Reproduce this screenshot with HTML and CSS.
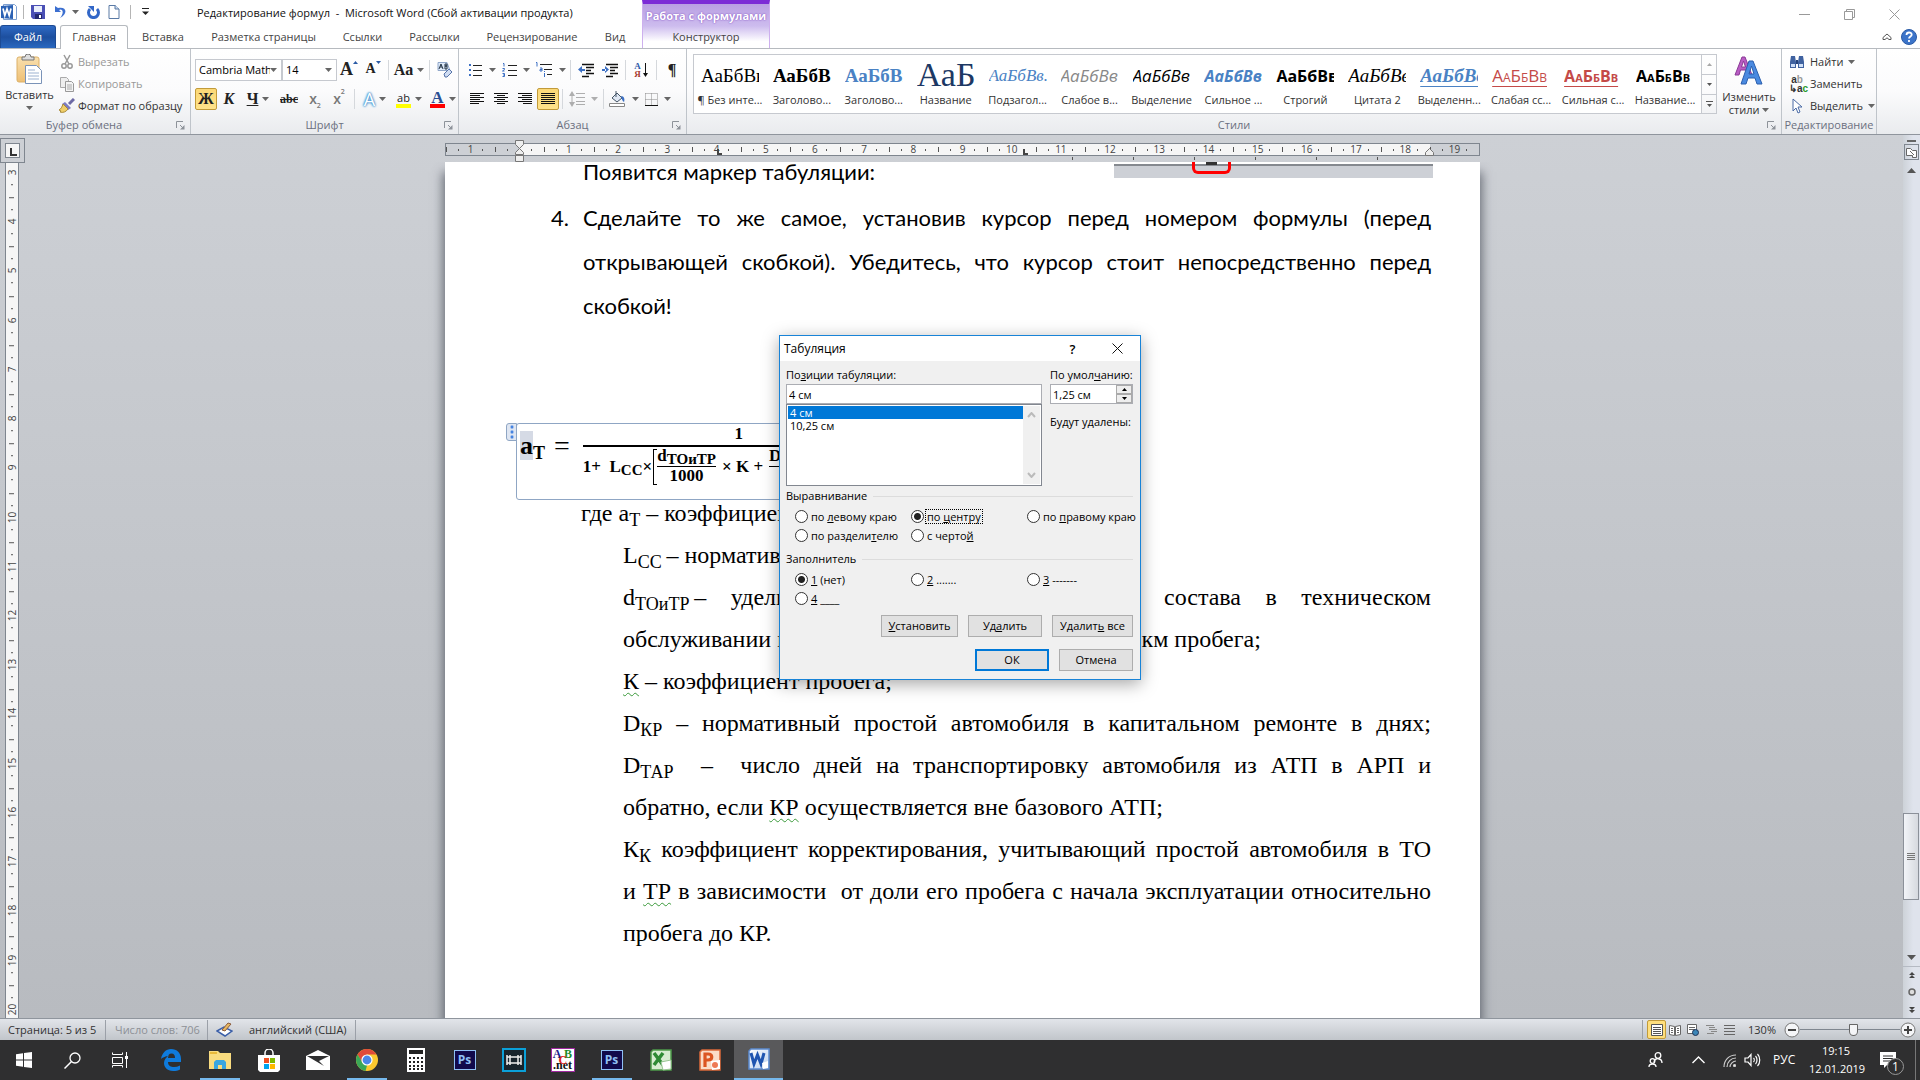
FILE: index.html
```html
<!DOCTYPE html>
<html lang="ru">
<head>
<meta charset="utf-8">
<title>Редактирование формул - Microsoft Word</title>
<link rel="stylesheet" href="styles.css">
</head>
<body>
<svg class="defs" aria-hidden="true">
  <defs>
    <linearGradient id="gw" x1="0" y1="0" x2="1" y2="1"><stop offset="0" stop-color="#fff"/><stop offset="1" stop-color="#b9d0ee"/></linearGradient>
    <linearGradient id="gp" x1="0" y1="0" x2="0" y2="1"><stop offset="0" stop-color="#f9e0ae"/><stop offset="1" stop-color="#eebf74"/></linearGradient>
    <symbol id="arrow" viewBox="0 0 7 4"><path d="M0 0h7L3.500 4z" fill="#666"/></symbol>
    <symbol id="launch" viewBox="0 0 9 9"><path d="M.5 7V.5H7M4 4l3 3" fill="none" stroke="#8d9299"/><path d="M8.500 4v4.500H4z" fill="#8d9299"/></symbol>
    <symbol id="word" viewBox="0 0 16 16"><path d="M2.500.5h11l2 2v13h-13z" fill="#fff" stroke="#7fa0cf"/><path d="M0 2l12-1v14L0 14z" fill="#2c62b5"/><path d="M2 4.500l1.800 7L6 5l2.200 6.500L10 4.500" fill="none" stroke="#fff" stroke-width="1.700"/></symbol>
  </defs>
</svg>

<header class="titlebar">
  <div class="quick">
    <svg width="16" height="16"><use href="#word"/></svg>
    <i class="vsep"></i>
    <button aria-label="Сохранить"><svg width="14" height="14" viewBox="0 0 14 14"><path d="M0 0h14v14H2l-2-2z" fill="#4a4fb5"/><path d="M3 1h8v6H3z" fill="#e9eefb"/><path d="M4 9h7v5H4z" fill="#23276e"/><path d="M8 10h2v3H8z" fill="#fff"/></svg></button>
    <button class="undo" aria-label="Отменить"><svg width="13" height="14" viewBox="0 0 13 14"><path d="M1 1v6h6L5 5c3-2 6 2 1 8 8-4 7-12-2-10z" fill="#3c6fd0"/></svg><svg class="ar"><use href="#arrow"/></svg></button>
    <button class="redo" aria-label="Повторить"><svg width="13" height="14" viewBox="0 0 13 14"><path d="M3 4a5 5 0 1 0 7 0" fill="none" stroke="#3267c8" stroke-width="3"/><path d="M1 1h6v6z" fill="#3267c8"/></svg></button>
    <button class="new" aria-label="Создать"><svg width="12" height="14" viewBox="0 0 12 14"><path d="M1 .5h6L11 4v9.500H1z" fill="#fff" stroke="#5a7aa5"/><path d="M7 0v4h4" fill="#c9d9ee" stroke="#5a7aa5"/></svg></button>
    <i class="vsep"></i>
    <button aria-label="Настройка панели"><svg width="7" height="8" viewBox="0 0 7 8"><path d="M0 .5h7" stroke="#222"/><path d="M0 3.500h7L3.500 7z" fill="#222"/></svg></button>
  </div>
  <h1>Редактирование формул&nbsp; -&nbsp; Microsoft Word (Сбой активации продукта)</h1>
  <div class="winbtns">
    <button aria-label="Свернуть"><svg width="11" height="11" viewBox="0 0 11 11"><path d="M0 5.500h11" stroke="#999"/></svg></button>
    <button aria-label="Развернуть"><svg width="11" height="11" viewBox="0 0 11 11"><path d="M.5 2.500h8v8h-8zM2.500 2V.5h8v8H9" fill="none" stroke="#999"/></svg></button>
    <button aria-label="Закрыть"><svg width="11" height="11" viewBox="0 0 11 11"><path d="M.5.5l10 10M10.500.5l-10 10" stroke="#999"/></svg></button>
  </div>
</header>

<nav class="tabs">
  <a class="file" href="#file">Файл</a>
  <a class="active" href="#home">Главная</a>
  <a href="#insert">Вставка</a>
  <a href="#layout">Разметка страницы</a>
  <a href="#refs">Ссылки</a>
  <a href="#mail">Рассылки</a>
  <a href="#review">Рецензирование</a>
  <a href="#view">Вид</a>
  <div class="context"><span>Работа с формулами</span><a href="#design">Конструктор</a></div>
  <div class="helpers">
    <button aria-label="Свернуть ленту"><svg width="10" height="8" viewBox="0 0 10 8"><path d="M1 4.500L5 1l4 3.500v2H7L5 4.800 3 6.500H1z" fill="#fff" stroke="#555"/></svg></button>
    <button aria-label="Справка"><svg width="16" height="16" viewBox="0 0 16 16"><circle cx="8" cy="8" r="7.500" fill="#3c74c9" stroke="#2a5aa5"/><path d="M5.500 6c0-3.400 5.200-3.200 5.200-.3C10.700 7.500 8 7.600 8 9.600M8 11v2" fill="none" stroke="#fff" stroke-width="1.800"/></svg></button>
  </div>
</nav>

<section class="ribbon">
  <div class="group clip">
    <div class="tools">
      <button class="big paste"><svg width="27" height="30" viewBox="0 0 27 30"><rect x="1" y="3" width="22" height="25" rx="2" fill="url(#gp)" stroke="#dcb068"/><path d="M6 6V3h3a3 3 0 0 1 6 0h3v3z" fill="#ddd" stroke="#777"/><path d="M9.500 11.500h11l5 5v13h-16z" fill="#fff" stroke="#7a93b8"/><path d="M12 16h7M12 19h11M12 22h11M12 25h11" stroke="#9db2d0"/></svg><span>Вставить</span><svg class="ar"><use href="#arrow"/></svg></button>
      <div class="stack">
        <button class="off"><svg width="16" height="16" viewBox="0 0 16 16"><path d="M5 1l5 9M11 1l-5 9" stroke="#999" stroke-width="1.500"/><circle cx="5" cy="12" r="2.200" fill="none" stroke="#999" stroke-width="1.500"/><circle cx="11" cy="12" r="2.200" fill="none" stroke="#999" stroke-width="1.500"/></svg>Вырезать</button>
        <button class="off"><svg width="16" height="16" viewBox="0 0 16 16"><path d="M1.500 1.500h6l2 2v8h-8z" fill="#eee" stroke="#aaa"/><path d="M6.500 5.500h6l2 2v8h-8z" fill="#f4f4f4" stroke="#999"/><path d="M8 9h5M8 11h5M8 13h5" stroke="#aaa"/></svg>Копировать</button>
        <button><svg width="16" height="16" viewBox="0 0 16 16"><path d="M15 1l-5 5" stroke="#6d6aa5" stroke-width="3"/><path d="M6 4l6 6-3 2-6-6z" fill="#7c7cc0"/><path d="M4 6l5 5c-2 3-5 4-8 3l1-1-2-1c2-1 3-3 4-6z" fill="#f0cf6a" stroke="#a98a3a"/></svg>Формат по образцу</button>
      </div>
    </div>
    <footer>Буфер обмена<svg width="9" height="9"><use href="#launch"/></svg></footer>
  </div>

  <div class="group font">
    <div class="rows">
      <div class="row">
        <div class="combo name"><select aria-label="Шрифт"><option>Cambria Math</option></select><svg class="ar"><use href="#arrow"/></svg></div>
        <div class="combo size"><select aria-label="Размер"><option>14</option></select><svg class="ar"><use href="#arrow"/></svg></div>
        <button class="ib serif grow">A<svg width="5" height="3" viewBox="0 0 5 3"><path d="M0 3h5L2.500 0z" fill="#2a5aa5"/></svg></button>
        <button class="ib serif shrink">A<svg width="5" height="3" viewBox="0 0 5 3"><path d="M0 0h5L2.500 3z" fill="#2a5aa5"/></svg></button>
        <i class="gsep"></i>
        <button class="ib wide serif">Aa<svg class="ar"><use href="#arrow"/></svg></button>
        <i class="gsep"></i>
        <button class="ib" aria-label="Очистить формат"><svg width="16" height="16" viewBox="0 0 16 16"><path d="M1 .5h9l3 8H1z" fill="#dce8f8" stroke="#8fa6c9"/><path d="M2 7l2-5 2 5M3 5h2M8 7V2h2v2H8h2v3z" fill="none" stroke="#234"/><path d="M7 12l5-5 3 3-5 5H8z" fill="#cfdcf2" stroke="#5673a8"/></svg></button>
      </div>
      <div class="row">
        <button class="ib serif on">Ж</button>
        <button class="ib serif it">К</button>
        <button class="ib wide serif"><u>Ч</u><svg class="ar"><use href="#arrow"/></svg></button>
        <button class="ib serif small"><s>abc</s></button>
        <button class="ib dim">x<sub>2</sub></button>
        <button class="ib dim">x<sup>2</sup></button>
        <i class="gsep"></i>
        <button class="ib wide glow">A<svg class="ar"><use href="#arrow"/></svg></button>
        <button class="ib wide mark"><span>ab</span><svg class="ar"><use href="#arrow"/></svg></button>
        <button class="ib wide serif color"><span>A</span><svg class="ar"><use href="#arrow"/></svg></button>
      </div>
    </div>
    <footer>Шрифт<svg width="9" height="9"><use href="#launch"/></svg></footer>
  </div>

  <div class="group para">
    <div class="rows">
      <div class="row">
        <button class="ib wide" aria-label="Маркеры"><svg width="15" height="14" viewBox="0 0 15 14"><path d="M5 2.500h9M5 7.500h9M5 12.500h9" stroke="#222"/><path d="M1 1h2v2H1zM1 6h2v2H1zM1 11h2v2H1z" fill="#3b6fc4"/></svg><svg class="ar"><use href="#arrow"/></svg></button>
        <button class="ib wide" aria-label="Нумерация"><svg width="15" height="14" viewBox="0 0 15 14"><path d="M6 2.500h9M6 7.500h9M6 12.500h9" stroke="#222"/><path d="M1 .5h1v3M.5 5.500h2v1l-2 1.500h2M.5 10.500h2v3h-2M1 12h2" fill="none" stroke="#3b6fc4"/></svg><svg class="ar"><use href="#arrow"/></svg></button>
        <button class="ib wide" aria-label="Многоуровневый список"><svg width="18" height="16" viewBox="0 0 18 16"><path d="M5 2.500h12M9 7.500h8M12 12.500h5" stroke="#222"/><path d="M1 .5h1v4M5 6h2v3H5V7.500h2M9.500 11v4M9.500 9v1" fill="none" stroke="#3b6fc4"/></svg><svg class="ar"><use href="#arrow"/></svg></button>
        <i class="gsep"></i>
        <button class="ib" aria-label="Уменьшить отступ"><svg width="16" height="15" viewBox="0 0 16 15"><path d="M4 1.500h12M8 4.500h8M8 7.500h5M8 10.500h8M4 13.500h7" stroke="#111" stroke-width="1.500"/><path d="M0 6.500L4 3v7zM3 6h4v2H3z" fill="#3b6fc4"/></svg></button>
        <button class="ib" aria-label="Увеличить отступ"><svg width="16" height="15" viewBox="0 0 16 15"><path d="M4 1.500h12M8 4.500h8M8 7.500h5M8 10.500h8M4 13.500h7" stroke="#111" stroke-width="1.500"/><path d="M7 6.500L3 3v7zM0 6h4v2H0z" fill="#3b6fc4"/></svg></button>
        <i class="gsep"></i>
        <button class="ib sort" aria-label="Сортировка"><span><b>А</b><b>Я</b></span><svg width="5" height="15" viewBox="0 0 5 15"><path d="M2.500 0v12" stroke="#111"/><path d="M0 10h5l-2.500 4z" fill="#111"/></svg></button>
        <i class="gsep"></i>
        <button class="ib serif" aria-label="Знаки">¶</button>
      </div>
      <div class="row">
        <button class="ib" aria-label="По левому краю"><svg width="14" height="12" viewBox="0 0 14 12"><path d="M0 .5h14M0 2.500h10M0 4.500h14M0 6.500h10M0 8.500h14M0 10.500h9" stroke="#111"/></svg></button>
        <button class="ib" aria-label="По центру"><svg width="14" height="12" viewBox="0 0 14 12"><path d="M0 .5h14M3 2.500h8M0 4.500h14M3 6.500h8M0 8.500h14M3 10.500h8" stroke="#111"/></svg></button>
        <button class="ib" aria-label="По правому краю"><svg width="14" height="12" viewBox="0 0 14 12"><path d="M0 .5h14M4 2.500h10M0 4.500h14M4 6.500h10M0 8.500h14M5 10.500h9" stroke="#111"/></svg></button>
        <button class="ib on" aria-label="По ширине"><svg width="14" height="12" viewBox="0 0 14 12"><path d="M0 .5h14M0 2.500h14M0 4.500h14M0 6.500h14M0 8.500h14M0 10.500h14" stroke="#111"/></svg></button>
        <i class="gsep"></i>
        <button class="ib wide faded" aria-label="Интервал"><svg width="16" height="16" viewBox="0 0 16 16"><path d="M7 2.500h9M7 6.500h9M7 10.500h9M7 13.500h9M3 2v12" stroke="#666"/><path d="M0 5h6L3 0zM0 11h6l-3 5z" fill="#666"/></svg><svg class="ar"><use href="#arrow"/></svg></button>
        <i class="gsep"></i>
        <button class="ib wide" aria-label="Заливка"><svg width="17" height="16" viewBox="0 0 17 16"><path d="M3 7l5-5 5 5-5 4z" fill="#dfe7f3" stroke="#456"/><path d="M7 0v6" stroke="#456"/><path d="M12 5c3 0 4 3 3 6-2-1-2-3-3-6z" fill="#3b6fc4"/><path d="M.5 12.500h15v3H.5z" fill="#fff" stroke="#888"/></svg><svg class="ar"><use href="#arrow"/></svg></button>
        <button class="ib wide" aria-label="Границы"><svg width="13" height="13" viewBox="0 0 13 13"><path d="M.5.5v12M6.500.5v12M12.500.5v12M.5.500h12M.5 6.500h12" stroke="#888" stroke-dasharray="1 1"/><path d="M0 12.500h13" stroke="#111"/></svg><svg class="ar"><use href="#arrow"/></svg></button>
      </div>
    </div>
    <footer>Абзац<svg width="9" height="9"><use href="#launch"/></svg></footer>
  </div>

  <div class="group styles">
    <div class="tools">
      <div class="gallery">
        <button><span class="pv times">АаБбВв</span>¶ Без инте...</button>
        <button><span class="pv times bold">АаБбВ</span>Заголово...</button>
        <button><span class="pv times bold blue">АаБбВв</span>Заголово...</button>
        <button><span class="pv times navy title">АаБ</span>Название</button>
        <button><span class="pv times blue ital sub">АаБбВв.</span>Подзагол...</button>
        <button><span class="pv grey ital">АаБбВв</span>Слабое в...</button>
        <button><span class="pv ital">АаБбВв</span>Выделение</button>
        <button><span class="pv blue bold ital">АаБбВв</span>Сильное ...</button>
        <button><span class="pv bold">АаБбВв</span>Строгий</button>
        <button><span class="pv times ital">АаБбВв</span>Цитата 2</button>
        <button><span class="pv times blue bold ital lined">АаБбВв</span>Выделенн...</button>
        <button><span class="pv red caps lined">АаБбВв</span>Слабая сс...</button>
        <button><span class="pv red caps bold lined">АаБбВв</span>Сильная с...</button>
        <button><span class="pv caps bold">АаБбВв</span>Название...</button>
      </div>
      <div class="scroller">
        <button class="faded" aria-label="Вверх"><svg width="5" height="3" viewBox="0 0 5 3"><path d="M0 3h5L2.500 0z" fill="#555"/></svg></button>
        <button aria-label="Вниз"><svg width="5" height="3" viewBox="0 0 5 3"><path d="M0 0h5L2.500 3z" fill="#555"/></svg></button>
        <button aria-label="Ещё"><svg width="7" height="6" viewBox="0 0 7 6"><path d="M0 .5h7" stroke="#555"/><path d="M1 3h5L3.500 6z" fill="#555"/></svg></button>
      </div>
      <button class="big change"><svg width="30" height="30" viewBox="0 0 30 30"><path d="M1 19L8 1h3l7 18h-4l-1.500-5H6.500L5 19zM7.500 11h4L9.500 5z" fill="#b95cc4" stroke="#8a3a96"/><path d="M7 28l8-23h4l9 23h-5l-2-6h-7l-2 6zM15 18h5l-2.500-8z" fill="#4a8ae0" stroke="#2b5fae"/></svg><span>Изменить<br>стили <svg class="ar"><use href="#arrow"/></svg></span></button>
    </div>
    <footer>Стили<svg width="9" height="9"><use href="#launch"/></svg></footer>
  </div>

  <div class="group edit">
    <div class="tools">
      <div class="stack">
        <button><svg width="16" height="16" viewBox="0 0 16 16"><path d="M2 2h4l1 6v6H1V8zM10 2h4l1 6v6H9V8z" fill="#3f62a0"/><path d="M7 6h2v4H7z" fill="#24427a"/><path d="M2 10h4v3H2zM10 10h4v3h-4z" fill="#cfe0f8"/></svg>Найти<svg class="ar"><use href="#arrow"/></svg></button>
        <button><span class="swap"><b>a<i>b</i></b><b>&#8627;a<em>c</em></b></span>Заменить</button>
        <button><svg width="16" height="16" viewBox="0 0 16 16"><path d="M4 1v12l3-3 2 5 2-1-2-5h4z" fill="#fff" stroke="#4a6aa5"/></svg>Выделить<svg class="ar"><use href="#arrow"/></svg></button>
      </div>
    </div>
    <footer>Редактирование</footer>
  </div>
</section>

<main class="work">
  <div class="left">
    <button class="corner" aria-label="Тип табуляции"><span></span></button>
    <div class="vruler"><div class="vcells"><span>3</span><span>4</span><span>5</span><span>6</span><span>7</span><span>8</span><span>9</span><span>10</span><span>11</span><span>12</span><span>13</span><span>14</span><span>15</span><span>16</span><span>17</span><span>18</span><span>19</span><span>20</span></div></div>
  </div>
  <div class="center">
    <div class="hruler">
      <div class="bar">
        <div class="hcells"><span>1</span><span></span><span>1</span><span>2</span><span>3</span><span>4</span><span>5</span><span>6</span><span>7</span><span>8</span><span>9</span><span>10</span><span>11</span><span>12</span><span>13</span><span>14</span><span>15</span><span>16</span><span>17</span><span>18</span><span>19</span></div>
        <svg class="indent-left" width="9" height="22" viewBox="0 0 9 22"><path d="M.5.5h8v4l-4 4 4 4v2h-8v-2l4-4-4-4zM.5 15.500h8v6h-8z" fill="#eee" stroke="#777"/></svg>
        <svg class="indent-right" width="9" height="8" viewBox="0 0 9 8"><path d="M.5 7.500v-3l4-4 4 4v3z" fill="#eee" stroke="#777"/></svg>
        <i class="tabstop first"></i>
        <i class="tabstop second"></i>
        <i class="defaults"></i>
      </div>
    </div>
    <div class="desk">
      <article class="page">
        <div class="topline">
          <p class="cal follow">Появится маркер табуляции:</p>
          <div class="fragment"><i></i></div>
        </div>
        <div class="item cal">
          <span>4.</span>
          <p class="full">Сделайте то же самое, установив курсор перед номером формулы (перед<br>открывающей скобкой). Убедитесь, что курсор стоит непосредственно перед<br><span class="last">скобкой!</span></p>
        </div>
        <div class="formula">
          <i class="handle"></i>
          <span class="lhs"><mark>a</mark><sub>T</sub></span>
          <span class="eq">=</span>
          <div class="frac">
            <div class="num">1</div>
            <div class="den">
              <span>1+&nbsp; L<sub>CC</sub>×</span>
              <div class="frac thin bracket"><div class="num">d<sub>ТОиТР</sub></div><div class="den">1000</div></div>
              <span>× K +</span>
              <div class="frac thin"><div class="num">D<sub>КР</sub></div></div>
            </div>
          </div>
        </div>
        <div class="terms">
          <p class="where">где a<sub>Т</sub> – коэффициент</p>
          <p>L<sub>CC</sub>&#8201;– нормативный</p>
          <p class="full">d<sub>ТОиТР</sub>&#8201;– удельный вес простоя подвижного состава в техническом<br><span class="last">обслуживании и текущем ремонте, в днях на 1000 км пробега;</span></p>
          <p><u>К</u> – коэффициент пробега;</p>
          <p class="full">D<sub>КР</sub> – нормативный простой автомобиля в капитальном ремонте в днях;<br>D<sub>ТАР</sub>&nbsp; –&nbsp; число дней на транспортировку автомобиля из АТП в АРП и<br><span class="last">обратно, если <u>КР</u> осуществляется вне базового АТП;</span></p>
          <p class="full">К<sub>К</sub> коэффициент корректирования, учитывающий простой автомобиля в ТО<br>и <u>ТР</u> в зависимости&nbsp; от доли его пробега с начала эксплуатации относительно<br><span class="last">пробега до КР.</span></p>
        </div>
      </article>
    </div>
  </div>
  <div class="scrollbar">
    <div class="split"><i></i><button aria-label="Линейка"><svg width="11" height="11" viewBox="0 0 11 11"><path d="M.5 1.500h4l2 2h4v7h-4v-2h-6zM4 4l4 4" fill="#fff" stroke="#666"/></svg></button></div>
    <button class="step" aria-label="Вверх"><svg width="9" height="5" viewBox="0 0 9 5"><path d="M0 5h9L4.500 0z" fill="#555"/></svg></button>
    <div class="above"></div>
    <div class="thumb"><i></i></div>
    <div class="below"></div>
    <button class="step" aria-label="Вниз"><svg width="9" height="5" viewBox="0 0 9 5"><path d="M0 0h9L4.500 5z" fill="#555"/></svg></button>
    <div class="browse">
      <button aria-label="Предыдущая"><svg width="6" height="7" viewBox="0 0 6 7"><path d="M0 3h6L3 0zM0 6h6L3 3z" fill="#444"/></svg></button>
      <button aria-label="Объект"><svg width="8" height="8" viewBox="0 0 8 8"><circle cx="4" cy="4" r="3" fill="#ddd" stroke="#666" stroke-width="1.500"/></svg></button>
      <button aria-label="Следующая"><svg width="6" height="7" viewBox="0 0 6 7"><path d="M0 1h6L3 4zM0 4h6L3 7z" fill="#444"/></svg></button>
    </div>
  </div>
</main>

<footer class="status">
  <span class="pages">Страница: 5 из 5</span>
  <span class="words">Число слов: 706</span>
  <span class="lang"><svg width="17" height="15" viewBox="0 0 17 15"><path d="M1 9l7-4 8 4-7 5z" fill="#fff" stroke="#3b5fa8" stroke-width="1.500"/><path d="M6 8l6-7 3 1-6 7z" fill="#e8b860" stroke="#8a5a3a"/></svg>английский (США)</span>
  <div class="views">
    <button class="on" aria-label="Разметка"><svg width="12" height="12" viewBox="0 0 12 12"><path d="M.5.5h11v11H.5zM2 3.500h8M2 5.500h8M2 7.500h8M2 9.500h8" fill="#fff" stroke="#555"/></svg></button>
    <button aria-label="Чтение"><svg width="12" height="12" viewBox="0 0 12 12"><path d="M.5 1.500l5 1v9l-5-1zM11.500 1.500l-5 1v9l5-1zM2 4.500h2M2 6.500h2M2 8.500h2M8 4.500h2M8 6.500h2M8 8.500h2" fill="#fff" stroke="#666"/></svg></button>
    <button aria-label="Веб"><svg width="12" height="12" viewBox="0 0 12 12"><path d="M.5.5h9v9h-9zM2 3.500h6M2 5.500h6" fill="#fff" stroke="#666"/><circle cx="8.500" cy="8.500" r="3" fill="#3b86b8" stroke="#235"/></svg></button>
    <button aria-label="Структура"><svg width="11" height="12" viewBox="0 0 11 12"><path d="M0 1.500h8M3 3.500h6M3 5.500h8M5 7.500h6M1 9.500h7" stroke="#888"/></svg></button>
    <button aria-label="Черновик"><svg width="11" height="12" viewBox="0 0 11 12"><path d="M0 1.500h11M0 4.500h11M0 7.500h11M0 10.500h11" stroke="#666"/></svg></button>
  </div>
  <span class="percent">130%</span>
  <button class="zoom" aria-label="Уменьшить"><svg width="16" height="16" viewBox="0 0 16 16"><circle cx="8" cy="8" r="7" fill="#f4f5f7" stroke="#777"/><path d="M4 8h8" stroke="#444" stroke-width="2"/></svg></button>
  <div class="slider"><input type="range" min="10" max="500" value="274" aria-label="Масштаб"></div>
  <button class="zoom" aria-label="Увеличить"><svg width="16" height="16" viewBox="0 0 16 16"><circle cx="8" cy="8" r="7" fill="#f4f5f7" stroke="#777"/><path d="M4 8h8M8 4v8" stroke="#444" stroke-width="2"/></svg></button>
</footer>

<footer class="taskbar">
  <div class="sys">
    <button aria-label="Пуск"><svg width="16" height="16" viewBox="0 0 16 16"><path d="M0 2.200L7 1.200V7.500H0zM8 1l8-1v7.500H8zM0 8.500h7v6.300L0 13.800zM8 8.500h8V16l-8-1z" fill="#fff"/></svg></button>
    <button aria-label="Поиск"><svg width="17" height="17" viewBox="0 0 17 17"><circle cx="11" cy="6" r="5" fill="none" stroke="#fff" stroke-width="1.300"/><path d="M7.500 9.500L.5 16.500" stroke="#fff" stroke-width="1.500"/></svg></button>
    <button aria-label="Задачи"><svg width="17" height="16" viewBox="0 0 17 16"><path d="M.5.500v2h10v-2M.5 5.500h10v6H.5zM.5 15.500v-2h10v2M14.500 0v16" fill="none" stroke="#fff"/><path d="M13 4h3v3h-3z" fill="#fff"/></svg></button>
  </div>
  <div class="apps">
    <button aria-label="Edge"><svg width="20" height="22" viewBox="0 0 20 22"><path d="M0 10C1 4 5 0 10 0c6 0 10 4 10 10v3H7c0 4 3 5 6 5 2 0 4-.5 6-1.500v4c-2 1-4 1.500-7 1.500-6 0-9-4-9-8 0-3 2-6 5-7C4 7 1 9 0 10zM7 9h7c0-3-1-4.500-3.500-4.500S7 6.500 7 9z" fill="#0f7bdc"/></svg></button>
    <button class="run" aria-label="Проводник"><svg width="22" height="18" viewBox="0 0 22 18"><path d="M0 0h9l2 2h11v16H0z" fill="#f9dc7f"/><path d="M1 1h7v2H1z" fill="#e8b93a"/><path d="M5 18v-7l2-2h8l2 2v7h-4v-4H9v4z" fill="#3aa6e0"/></svg></button>
    <button aria-label="Магазин"><svg width="22" height="23" viewBox="0 0 22 23"><path d="M7 7V4a4 4 0 0 1 8 0v3" fill="none" stroke="#fff" stroke-width="1.500"/><path d="M0 6h22v15l-2 2H2l-2-2z" fill="#fff"/><path d="M6 9h5v5H6z" fill="#f25022"/><path d="M12 9h5v5h-5z" fill="#7fba00"/><path d="M6 15h5v5H6z" fill="#00a4ef"/><path d="M12 15h5v5h-5z" fill="#ffb900"/></svg></button>
    <button aria-label="Почта"><svg width="24" height="20" viewBox="0 0 24 20"><path d="M0 6l12-6 12 6v14H0z" fill="#fff"/><path d="M1 6h22l-10 5 5 5z" fill="#2f2f30"/></svg></button>
    <button class="run" aria-label="Chrome"><svg width="22" height="22" viewBox="0 0 22 22"><circle cx="11" cy="11" r="11" fill="#fbc82f"/><path d="M1.500 5.500A11 11 0 0 1 20.500 5.500H11l-5 8z" fill="#e04a3a"/><path d="M1.500 5.500l5 8 4.500 3-1.500 5.400A11 11 0 0 1 1.500 5.500z" fill="#3aa757"/><circle cx="11" cy="11" r="5" fill="#4a86e8" stroke="#fff" stroke-width="1.200"/></svg></button>
    <button aria-label="Калькулятор"><svg width="18" height="24" viewBox="0 0 18 24"><path d="M0 0h18v24H0z" fill="#fff"/><path d="M2 2h14v4H2z" fill="#222"/><path d="M2 10h14M2 14h14M2 18h14M2 21h14" stroke="#222" stroke-width="2" stroke-dasharray="2 2"/></svg></button>
    <button><span class="tile ps">Ps</span></button>
    <button aria-label="Видео"><svg width="24" height="24" viewBox="0 0 24 24"><path d="M1 1h22v22H1z" fill="#18242c" stroke="#0ba0d8" stroke-width="2"/><path d="M5 7v10M19 7v10M8 7v10M16 7v10M5 9h14M5 15h14" fill="none" stroke="#eee" stroke-width="1.500"/></svg></button>
    <button><span class="tile abc"><b class="a">A</b><b class="b">B</b><b class="c">C</b><b class="n">.net</b></span></button>
    <button class="run"><span class="tile ps">Ps</span></button>
    <button aria-label="Excel"><svg width="22" height="22" viewBox="0 0 22 22"><path d="M3 1h18v20H1V3z" fill="#d8ecd2" stroke="#4e9a4a" stroke-width="1.500"/><path d="M4 4l9 12M13 4L4 16" stroke="#2f8a35" stroke-width="3.500"/><path d="M11 13l10-2v9l-8 1z" fill="#fff" stroke="#9ac694"/></svg></button>
    <button aria-label="PowerPoint"><svg width="22" height="22" viewBox="0 0 22 22"><path d="M3 1h18v20H1V3z" fill="#fbdcc8" stroke="#dc6a3a" stroke-width="1.500"/><path d="M6 18V5h3c5 0 5 6 0 6H7" fill="none" stroke="#dc5522" stroke-width="3.200"/><path d="M12 12l9-1v9l-8 1z" fill="#fff"/><circle cx="16" cy="16" r="3" fill="#ee7a55"/></svg></button>
    <button class="cur" aria-label="Word"><svg width="22" height="22" viewBox="0 0 22 22"><path d="M3 1h18v20H1V3z" fill="url(#gw)" stroke="#5b8ad0" stroke-width="1.500"/><path d="M3 5l3 11 3.500-9L13 16l3-11" fill="none" stroke="#1f55b0" stroke-width="3"/><path d="M14 15l6-2v7l-5 1z" fill="#fff"/></svg></button>
  </div>
  <div class="tray">
    <svg width="15" height="16" viewBox="0 0 15 16" fill="none" stroke="#fff" stroke-width="1.300"><circle cx="10" cy="3.500" r="2.800"/><path d="M6 10c1-5 8-4 8 1"/><circle cx="4.500" cy="9" r="2.300"/><path d="M1 15c0-4 7-4 7 0"/></svg>
    <svg width="13" height="8" viewBox="0 0 13 8"><path d="M.5 7L6.500 1l6 6" fill="none" stroke="#fff" stroke-width="1.400"/></svg>
    <svg width="13" height="13" viewBox="0 0 13 13" fill="none" stroke="#ccc" stroke-width="1.200"><path d="M1 13C1 6 6 1 13 1M4 13c0-5 4-9 9-9M7 13c0-3 3-6 6-6"/><circle cx="11.500" cy="11.500" r="1" fill="#fff"/></svg>
    <svg width="17" height="14" viewBox="0 0 17 14" fill="none" stroke="#fff" stroke-width="1.200"><path d="M1 5h3l3-3.500v11L4 9H1zM9.500 5c1 1 1 3 0 4M11.500 3c2 2 2 6 0 8M13.500 1c3 3 3 9 0 12"/></svg>
    <span class="ime">РУС</span>
    <time>19:15<br>12.01.2019</time>
    <div class="note"><svg width="16" height="16" viewBox="0 0 16 16"><path d="M0 0h16v13h-9l-3 3v-3H0z" fill="#fff"/><path d="M3 4h10M3 6.500h10M3 9h7" stroke="#2f2f30"/></svg><span>1</span></div>
  </div>
</footer>

<form class="dialog" role="dialog" aria-label="Табуляция">
  <header><h2>Табуляция</h2><button type="button">?</button><button type="button" class="x" aria-label="Закрыть"><svg width="11" height="11" viewBox="0 0 11 11"><path d="M.5.5l10 10M10.500.5l-10 10" stroke="#111"/></svg></button></header>
  <div class="body">
    <div class="cols">
      <div class="positions">
        <label for="pos">По<u>з</u>иции табуляции:</label>
        <input id="pos" type="text" value="4 см">
        <div class="list">
          <ul role="listbox" aria-label="Позиции"><li role="option" aria-selected="true">4 см</li><li role="option">10,25 см</li></ul>
          <div class="lscroll"><svg width="9" height="6" viewBox="0 0 9 6"><path d="M1 5l3.500-4L8 5" fill="none" stroke="#bbb" stroke-width="2"/></svg><svg width="9" height="6" viewBox="0 0 9 6"><path d="M1 1l3.500 4L8 1" fill="none" stroke="#bbb" stroke-width="2"/></svg></div>
        </div>
      </div>
      <div class="defcol">
        <label for="def">По умол<u>ч</u>анию:</label>
        <div class="spin"><input id="def" type="text" value="1,25 см"><div><button type="button" aria-label="Больше"><svg width="5" height="3" viewBox="0 0 5 3"><path d="M0 3h5L2.500 0z"/></svg></button><button type="button" aria-label="Меньше"><svg width="5" height="3" viewBox="0 0 5 3"><path d="M0 0h5L2.500 3z"/></svg></button></div></div>
        <p>Будут удалены:</p>
      </div>
    </div>
    <fieldset>
      <legend>Выравнивание</legend>
      <div class="opts">
        <label><input type="radio" name="al"><span>по <u>л</u>евому краю</span></label>
        <label><input type="radio" name="al" checked><span class="focus">по <u>ц</u>ентру</span></label>
        <label><input type="radio" name="al"><span>по <u>п</u>равому краю</span></label>
        <label><input type="radio" name="al"><span>по раздели<u>т</u>елю</span></label>
        <label><input type="radio" name="al"><span>с черто<u>й</u></span></label>
      </div>
    </fieldset>
    <fieldset>
      <legend>Заполнитель</legend>
      <div class="opts">
        <label><input type="radio" name="fill" checked><span><u>1</u> (нет)</span></label>
        <label><input type="radio" name="fill"><span><u>2</u> .......</span></label>
        <label><input type="radio" name="fill"><span><u>3</u> -------</span></label>
        <label><input type="radio" name="fill"><span><u>4</u> ____</span></label>
      </div>
    </fieldset>
    <div class="acts first-acts">
      <button type="button" class="set"><span><u>У</u>становить</span></button>
      <button type="button"><span>Уд<u>а</u>лить</span></button>
      <button type="button" class="all"><span>Удалит<u>ь</u> все</span></button>
    </div>
    <div class="acts">
      <button type="button" class="ok">ОК</button>
      <button type="button">Отмена</button>
    </div>
  </div>
</form>
</body>
</html>
```
FILE: styles.css
```css
* { box-sizing: border-box; }

body {
  margin: 0;
  height: 100vh;
  display: flex;
  flex-direction: column;
  overflow: hidden;
  background: #fff;
  font: 11px/16px "Open Sans", "Noto Sans", sans-serif;
  color: #333;
}

button {
  margin: 0;
  padding: 0;
  border: 0;
  background: none;
  font: inherit;
  color: inherit;
  display: flex;
  align-items: center;
  justify-content: center;
  white-space: nowrap;
}

a { color: inherit; text-decoration: none; }
p, h1, h2, ul { margin: 0; padding: 0; font-weight: 400; }
svg { flex: none; }
.defs { position: absolute; width: 0; height: 0; }
.ar { width: 7px; height: 4px; }

/* title bar */
.titlebar { height: 25px; display: flex; flex: none; }
.quick { width: 197px; display: flex; align-items: center; padding: 0 0 2px 1px; gap: 4px; }
.quick button { min-width: 16px; }
.vsep { width: 1px; height: 14px; background: #b5b5b5; margin: 0 2px; }
.undo { gap: 5px; padding-left: 4px; }
.redo { padding-left: 4px; }
.new { padding: 0 4px; }
.titlebar h1 { font-size: 11px; line-height: 25px; color: #111; flex: 1; }
.winbtns { display: flex; padding: 4px 3px 0 0; }
.winbtns button { width: 45px; height: 20px; }

/* tabs */
.tabs {
  height: 24px;
  flex: none;
  display: flex;
  border-bottom: 1px solid #b6babf;
  text-align: center;
  line-height: 24px;
  color: #444;
}
.tabs > a:nth-child(2) { width: 68px; }
.tabs > a:nth-child(3) { width: 70px; }
.tabs > a:nth-child(4) { width: 131px; }
.tabs > a:nth-child(5) { width: 67px; }
.tabs > a:nth-child(6) { width: 77px; }
.tabs > a:nth-child(7) { width: 118px; }
.tabs > a:nth-child(8) { width: 48px; }
.tabs > a.file {
  width: 56px;
  margin-right: 4px;
  color: #fff;
  background: linear-gradient(#2f6ac4, #1d4f9f 50%, #2a68bf);
  border: 1px solid #1d4b94;
  border-bottom: 0;
  border-radius: 3px 3px 0 0;
  line-height: 22px;
}
.tabs > a.active {
  border: 1px solid #b6babf;
  border-bottom: 0;
  border-radius: 3px 3px 0 0;
  background: #fff;
  margin-bottom: -1px;
  line-height: 22px;
}
.context {
  width: 128px;
  margin: -25px 0 0 3px;
  padding-top: 3px;
  border-top: 4px solid #7c2bd6;
  border-left: 1px solid #cdb0ee;
  border-right: 1px solid #cdb0ee;
  background: linear-gradient(#b99fe2, #cdbcee 50%, #fff 85%);
  display: flex;
  flex-direction: column;
  line-height: 18px;
}
.context span { color: #fff; font-weight: 700; text-shadow: 0 0 2px #8a5cc8, 0 0 1px #8a5cc8; white-space: nowrap; }
.context a { line-height: 24px; }
.helpers { margin-left: auto; display: flex; gap: 9px; padding-right: 3px; }

/* ribbon */
.ribbon {
  height: 86px;
  flex: none;
  display: flex;
  padding-right: 43px;
  background: linear-gradient(#fff, #fbfbfc 50%, #e9ebee);
  border-bottom: 1px solid #8f959d;
}
.group { display: flex; flex-direction: column; border-right: 1px solid #bfc4ca; }
.clip { width: 191px; }
.font { width: 268px; }
.para { width: 228px; }
.styles { flex: 1; min-width: 0; }
.edit { width: 95px; }
.group footer {
  position: relative;
  height: 17px;
  margin-top: auto;
  text-align: center;
  color: #6b7080;
  white-space: nowrap;
}
.group footer svg { position: absolute; right: 5px; top: 4px; }
.clip footer { padding-right: 22px; }
.tools { display: flex; }
.big { flex-direction: column; justify-content: flex-start; }
.paste { width: 59px; height: 66px; padding-top: 5px; }
.paste span { line-height: 22px; }
.stack { display: flex; flex-direction: column; padding-top: 2px; }
.stack button { height: 22px; justify-content: flex-start; gap: 3px; }
.edit .stack button { padding-left: 7px; gap: 5px; }
.off { color: #999; }
.rows { padding: 10px 0 0 4px; display: flex; flex-direction: column; gap: 7px; }
.para .rows { padding-left: 6px; }
.row { display: flex; height: 22px; align-items: center; }
.row > * { flex: none; }
.combo { position: relative; height: 22px; border: 1px solid #c6c9cf; background: #fff; display: flex; align-items: center; }
.combo select { appearance: none; border: 0; background: none; font: inherit; color: #000; padding: 0 0 0 3px; width: 74px; height: 20px; overflow: hidden; text-overflow: clip; }
.combo .ar { position: absolute; right: 4px; }
.name { width: 87px; }
.size { width: 55px; }
.size select { width: 36px; }
.ib { width: 24px; height: 22px; gap: 2px; color: #222; }
.wide { width: 34px; gap: 4px; }
.para .wide { gap: 6px; }
.serif { font: 700 16px/20px "Liberation Serif", serif; }
.it { font-style: italic; }
.ib.small { font-size: 12px; width: 28px; }
.ib.on { width: 22px; border: 1px solid #c29b3a; border-radius: 2px; background: linear-gradient(#fbd877, #ffe38a); }
.grow { font-size: 18px; align-items: flex-start; gap: 0; }
.shrink { font-size: 14px; align-items: flex-start; gap: 0; }
.grow svg, .shrink svg { margin-top: 2px; }
.gsep { width: 1px; height: 20px; background: #d5d8dc; margin: 0 3px; }
.dim { color: #777; font-size: 14px; align-items: center; gap: 0; font-weight: 600; }
.dim sub, .dim sup { font-size: 7px; line-height: 8px; }
.dim sub { align-self: flex-end; }
.dim sup { align-self: flex-start; }
.glow { font-size: 18px; color: #fff; text-shadow: 0 0 2px #3a8fd0, 0 0 2px #3a8fd0, 0 0 3px #3a8fd0; }
.mark span { font-size: 11px; line-height: 13px; border-bottom: 4px solid #ff0; padding: 0 1px; }
.color span { font-size: 17px; line-height: 13px; color: #2b4f93; border-bottom: 4px solid #f00; padding: 0 1px; }
.faded { opacity: .5; }
.sort span { display: flex; flex-direction: column; font: 700 9px/8px "Liberation Serif", serif; color: #2f5aa8; }
.sort b + b { color: #a83a30; }

.gallery {
  flex: 1;
  min-width: 0;
  margin: 5px 0 0 6px;
  height: 60px;
  display: grid;
  grid-template-columns: repeat(14, 1fr);
  border: 1px solid #c6c9cf;
  background: #fff;
}
.gallery button { flex-direction: column; justify-content: flex-start; line-height: 16px; min-width: 0; }
.pv {
  width: 58px;
  height: 28px;
  margin: 8px 0 1px;
  overflow: hidden;
  text-align: left;
  font-size: 17px;
  line-height: 26px;
  color: #000;
}
.times { font-family: "Liberation Serif", serif; font-size: 19px; }
.bold { font-weight: 700; }
.ital { font-style: italic; }
.pv.bold:not(.times) { font-size: 16px; }
.pv.sub { font-size: 17px; }
.pv.title { font-size: 34px; line-height: 24px; }
.pv.blue { color: #4a82c4; }
.pv.navy { color: #1c3864; }
.pv.grey { color: #888; }
.pv.red { color: #c44a48; }
.pv.caps { font-variant: small-caps; font-size: 17px; }
.lined { text-decoration: underline; text-underline-offset: 4px; }
.scroller { width: 15px; height: 60px; margin-top: 5px; display: grid; grid-template-rows: repeat(3, 1fr); border: 1px solid #c6c9cf; border-left: 0; }
.scroller button + button { border-top: 1px solid #c6c9cf; }
.change { width: 64px; padding-top: 7px; line-height: 13px; }
.change span { margin-top: 4px; }
.change .ar { vertical-align: 2px; }
.swap { width: 16px; font: 10px/9px "Liberation Sans", sans-serif; }
.swap b { display: block; color: #333; }
.swap i { color: #999; font-style: normal; }
.swap em { color: #2a9a2a; font-style: normal; }

/* document area */
.work { flex: 1; min-height: 0; display: flex; background: linear-gradient(#cdd0d5, #b8bbc0); }
.left { width: 22px; display: flex; flex-direction: column; }
.corner { width: 25px; height: 25px; margin-top: 3px; flex: none; border: 1px solid #7f868f; }
.corner span { width: 15px; height: 15px; border: 1px solid #7f868f; background: #f6f6f6; }
.corner span::before { content: ""; display: block; width: 5px; height: 6px; margin: 4px; border: solid #333; border-width: 0 0 2px 2px; }
.vruler { flex: 1; min-height: 0; width: 14px; margin: 0 0 0 5px; overflow: hidden; background: #f6f6f6; border: solid #7f868f; border-width: 0 1px; }
.vcells { height: 886px; margin-top: -15px; display: grid; grid-template-rows: repeat(18, 1fr); }
.vcells span {
  writing-mode: vertical-rl;
  transform: rotate(180deg);
  display: flex;
  align-items: center;
  justify-content: center;
  font-size: 10px;
  line-height: 12px;
  color: #444;
  background:
    linear-gradient(#555, #555) 50% 25% / 2px 1px no-repeat,
    linear-gradient(#555, #555) 50% 75% / 2px 1px no-repeat,
    linear-gradient(#555, #555) 50% 100% / 5px 1px no-repeat;
}
.center { flex: 1; min-width: 0; display: flex; flex-direction: column; }
.hruler { height: 27px; flex: none; display: flex; justify-content: center; padding-top: 8px; }
.bar { position: relative; width: 1035px; height: 13px; border: 1px solid #7f868f; background: linear-gradient(90deg, #cdd0d5 74px, #f6f6f6 74px, #f6f6f6 984px, #cdd0d5 984px); }
.hcells { display: grid; grid-template-columns: repeat(21, 1fr); height: 11px; }
.hcells span {
  text-align: center;
  font-size: 10px;
  line-height: 11px;
  color: #444;
  background:
    linear-gradient(#555, #555) 25% 50% / 1px 2px no-repeat,
    linear-gradient(#555, #555) 75% 50% / 1px 2px no-repeat,
    linear-gradient(#555, #555) 0 50% / 1px 5px no-repeat;
}
.indent-left { position: absolute; left: 69px; top: -4px; }
.indent-right { position: absolute; left: 979px; top: 4px; }
.tabstop { position: absolute; top: 5px; width: 5px; height: 6px; border: solid #444; border-width: 0 0 2px 2px; }
.first { left: 271px; }
.second { left: 577px; }
.defaults { position: absolute; left: 626px; top: 13px; width: 309px; height: 3px; background: repeating-linear-gradient(90deg, #555 0 1px, transparent 1px 61px); }
.desk { flex: 1; min-height: 0; display: flex; justify-content: center; overflow: hidden; }

.page {
  flex: 0 1 1035px;
  height: 100%;
  overflow: hidden;
  background: #fff;
  color: #000;
  padding: 0 49px 0 106px;
  box-shadow: 0 12px 10px 2px rgba(70, 75, 85, .75);
}
.cal { font: 22px/44px Lato, "Open Sans", sans-serif; }
.topline { display: flex; justify-content: space-between; height: 34px; }
.follow { margin: -12px 0 0 32px; }
.fragment { width: 319px; height: 16px; margin-right: -2px; border-top: 2px solid #fff; background: linear-gradient(#85898f 2px, #cdd0d6 2px); }
.fragment i { display: block; width: 39px; height: 13px; margin: -3px 0 0 78px; border: 3px solid #f00; border-top: 0; border-radius: 0 0 6px 6px; background: linear-gradient(#333, #333) 50% 0 / 11px 4px no-repeat; }
.item { display: flex; }
.item > span { width: 32px; }
.item p { flex: 1; }
.full { text-align: justify; text-align-last: justify; white-space: normal; }
.last { display: block; text-align-last: left; }

.formula {
  position: relative;
  width: 400px;
  height: 77px;
  margin: 95px 0 0 -35px;
  padding: 0 0 0 3px;
  border: 1px solid #8fa6c4;
  border-radius: 3px;
  display: flex;
  font: 700 17px/20px "Liberation Serif", serif;
}
.handle { position: absolute; left: -11px; top: -1px; width: 11px; height: 18px; border: 1px solid #8fa6c4; border-radius: 3px 0 0 3px; background: radial-gradient(circle, #3b7de0 1px, transparent 2px) 50% 50% / 4px 5px repeat-y #dfe6f2; }
.lhs { font-size: 26px; line-height: 26px; padding-top: 9px; }
mark { background: #d5dae5; color: inherit; }
.eq { font-weight: 400; font-size: 28px; line-height: 44px; padding: 0 13px 0 9px; }
sub { font-size: 18px; line-height: 0; vertical-align: -5px; }
.frac { display: flex; flex-direction: column; }
.num { text-align: center; border-bottom: 2px solid #000; }
.formula > .frac > .num { height: 23px; line-height: 19px; }
.formula > .frac { width: 312px; }
.formula > .frac > .den { display: flex; gap: 6px; padding-top: 2px; line-height: 36px; white-space: nowrap; }
.thin .num { border-width: 1px; line-height: 14px; height: 18px; }
.thin .den { line-height: 18px; text-align: center; }
.bracket {
  margin-left: -5px;
  padding-left: 4px;
  background:
    linear-gradient(#000, #000) 0 0 / 1px 100% no-repeat,
    linear-gradient(#000, #000) 0 0 / 4px 1px no-repeat,
    linear-gradient(#000, #000) 0 100% / 4px 1px no-repeat;
}
.formula sub { vertical-align: -3px; font-size: 15px; }
.formula .lhs sub { font-size: 18px; vertical-align: -5px; }

.terms { margin-top: -8px; font: 24px/42px "Liberation Serif", serif; padding-left: 72px; }
.where { margin-left: -42px; }
.terms u { text-decoration: underline wavy #3a9a3a 1px; text-underline-offset: 3px; }

/* vertical scroll bar */
.scrollbar { width: 17px; display: flex; flex-direction: column; background: linear-gradient(90deg, #cdd2d8, #dfe3ec 60%); }
.split { height: 27px; padding: 5px 1px 0; }
.split i { display: block; height: 2px; margin: 0 3px 2px; background: #666; }
.split button { width: 15px; height: 16px; border: 1px solid #7f868f; }
.step { height: 17px; width: 17px; }
.above { flex: 13; }
.below { flex: 1; }
.thumb { height: 87px; width: 16px; border: 1px solid #8b9099; background: linear-gradient(90deg, #f2f4f8, #d6d9df); display: flex; align-items: center; justify-content: center; }
.thumb i { width: 8px; height: 7px; background: repeating-linear-gradient(#777 0 1px, transparent 1px 2px); }
.browse { height: 52px; border-top: 1px solid #b5bac3; display: flex; flex-direction: column; justify-content: space-around; align-items: center; }

/* status bar */
.status { height: 22px; flex: none; display: flex; align-items: center; border-top: 1px solid #8f959d; background: linear-gradient(#e2e5ea, #c1c5ca); white-space: nowrap; }
.status > span { border-right: 1px solid #9ba0a8; line-height: 20px; }
.pages { width: 106px; padding-left: 8px; }
.words { width: 102px; padding-left: 9px; color: #8d9096; }
.lang { width: 148px; padding-left: 8px; display: flex; align-items: center; gap: 16px; }
.views { margin-left: auto; padding-left: 4px; border-left: 1px solid #9ba0a8; display: flex; }
.views button { width: 18px; height: 19px; }
.views .on { width: 19px; border: 1px solid #c29b3a; border-radius: 2px; background: #ffdf7d; }
.status .percent { border: 0; width: 39px; text-align: right; padding-right: 1px; }
.zoom { width: 16px; margin-left: 7px; }
.slider { width: 100px; display: flex; }
.slider + .zoom { margin: 0 4px 0 0; }
.slider input { width: 100%; margin: 0; appearance: none; height: 16px; background: linear-gradient(#7f868f, #7f868f) 0 50% / 100% 1px no-repeat; }
.slider input::-webkit-slider-thumb { appearance: none; width: 9px; height: 12px; background: #f4f5f7; border: 1px solid #666; border-radius: 1px 1px 5px 5px; }

/* task bar */
.taskbar { height: 40px; flex: none; display: flex; background: #2f2f30; color: #fff; }
.sys { display: flex; width: 146px; }
.sys button { width: 48px; height: 40px; }
.apps { display: flex; }
.apps button { width: 49px; height: 40px; }
.run { background: linear-gradient(#76b9ed, #76b9ed) 50% 100% / 40px 2px no-repeat; }
.apps .cur { background: #59595b; border-bottom: 2px solid #76b9ed; }
.tile { width: 22px; height: 20px; }
.ps { border: 1px solid #8fc0f5; background: #110a4c; color: #8fc0f5; font-size: 12px; line-height: 17px; font-weight: 700; }
.abc { position: relative; height: 24px; width: 24px; background: #fff; border: 1px solid #a02aa0; display: grid; grid-template-columns: 1fr 1fr; font: 700 12px/11px "Liberation Serif", serif; }
.a { color: #1c1c8a; }
.b { color: #1f8a2a; }
.c { position: absolute; left: 7px; top: 6px; color: #e02020; }
.n { grid-column: 1 / 3; color: #111; }
.tray { margin-left: auto; display: flex; align-items: center; padding-right: 4px; }
.tray > svg { margin-right: 12px; }
.tray > svg:nth-child(1) { margin-right: 29px; }
.tray > svg:nth-child(2) { margin-right: 18px; }
.tray > svg:nth-child(3) { margin-right: 8px; }
.ime { width: 36px; font-size: 12px; }
time { width: 54px; text-align: center; line-height: 18px; white-space: nowrap; }
.note { position: relative; width: 53px; height: 40px; padding: 12px 0 0 17px; border-right: 1px solid #777; }
.note span { position: absolute; left: 24px; top: 18px; width: 17px; height: 17px; border: 1px solid #999; border-radius: 50%; background: #2f2f30; text-align: center; line-height: 15px; font-size: 12px; }

/* dialog */
.dialog {
  position: absolute;
  left: 0;
  right: 0;
  top: 335px;
  width: 362px;
  height: 345px;
  margin: 0 auto;
  border: 1px solid #1883d7;
  background: #f0f0f0;
  box-shadow: 0 4px 16px rgba(0, 0, 0, .35);
  font: 11px/14px "Open Sans", "Noto Sans", sans-serif;
  color: #000;
}
.dialog header { display: flex; height: 25px; background: #fff; align-items: center; padding-left: 4px; }
.dialog h2 { flex: 1; font-size: 12px; }
.dialog header button { width: 45px; font-size: 13px; font-weight: 600; }
.dialog .body { padding: 7px 7px 0 6px; }
.cols { display: flex; gap: 8px; }
.positions { width: 256px; }
.positions label, .defcol label { display: block; height: 16px; white-space: nowrap; }
.dialog input[type="text"] { width: 100%; height: 20px; border: 1px solid #abadb3; background: #fff; font: inherit; color: inherit; padding: 0 2px; margin: 0; display: block; }
.list { height: 82px; border: 1px solid #828790; background: #fff; padding: 1px; display: flex; }
.list ul { flex: 1; list-style: none; }
.list li { line-height: 13px; padding-left: 2px; white-space: nowrap; }
.list li[aria-selected] { background: #0078d7; color: #fff; }
.lscroll { width: 17px; background: #f0f0f0; display: flex; flex-direction: column; justify-content: space-between; align-items: center; padding: 6px 0; }
.defcol { flex: 1; min-width: 0; }
.spin { display: flex; width: 83px; height: 20px; border: 1px solid #abadb3; background: #fff; }
.dialog .spin input { border: 0; height: 18px; flex: 1; min-width: 0; }
.spin button { width: 16px; height: 9px; border: 1px solid #aaa; background: #eee; }
.defcol p { margin-top: 11px; white-space: nowrap; }
fieldset { border: 0; margin: 3px 0 0; padding: 0; min-width: 0; }
legend { padding: 0; display: flex; width: 100%; align-items: center; gap: 6px; line-height: 14px; }
legend::after { content: ""; flex: 1; height: 1px; background: #dcdcdc; }
.opts { display: grid; grid-template-columns: 116px 116px 1fr; grid-auto-rows: 19px; padding: 4px 0 0 9px; margin-bottom: 4px; }
.opts label { display: flex; align-items: center; gap: 1px; white-space: nowrap; min-width: 0; }
.opts input { flex: none; appearance: none; width: 13px; height: 13px; margin: 0; border: 1px solid #333; border-radius: 50%; background: #fff; }
.opts input:checked { background: radial-gradient(circle, #222 3px, #fff 4px); }
.opts span { padding: 0 1px; border: 1px solid transparent; line-height: 13px; }
.opts .focus { border: 1px dotted #000; }
.acts { display: flex; justify-content: flex-end; gap: 10px; margin: 0 0 12px; }
.first-acts { padding-top: 3px; }
.acts button { width: 74px; height: 22px; border: 1px solid #adadad; background: #e1e1e1; }
.acts .set { width: 77px; }
.acts .all { width: 81px; }
.acts .ok { border: 2px solid #0078d7; }
```
